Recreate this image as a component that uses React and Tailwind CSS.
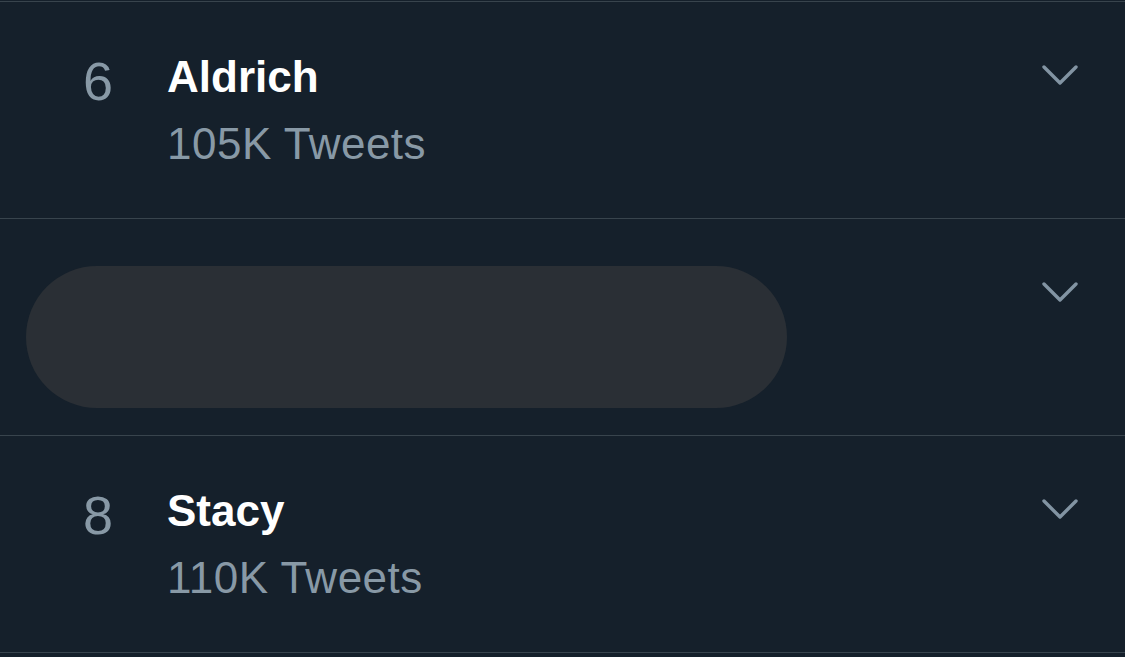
import React from "react";

function Chevron({ className = "" }) {
  return (
    <svg
      className={className}
      width="36"
      height="22"
      viewBox="0 0 36 22"
      fill="none"
      stroke="#8294a3"
      strokeWidth="3.4"
      strokeLinecap="round"
      strokeLinejoin="round"
    >
      <polyline points="2,3 18,19 34,3" />
    </svg>
  );
}

function TrendRow({ rank, name, count }) {
  return (
    <div className="flex h-[217px] items-start border-b border-[#38444d] pl-[83px] pr-[47px] pt-[49px]">
      <div className="w-[84px] mt-[4px] text-[54px] leading-[52px] text-[#8899a6]">{rank}</div>
      <div className="flex flex-1 flex-col">
        <div className="text-[44px] leading-[52px] font-bold text-white">{name}</div>
        <div className="mt-[15px] text-[44px] leading-[52px] tracking-[0.5px] text-[#8899a6]">{count}</div>
      </div>
      <Chevron className="mt-[13px] shrink-0" />
    </div>
  );
}

export default function App() {
  return (
    <div
      className="h-[657px] w-full overflow-hidden bg-[#15202b] pt-[1px]"
      style={{ fontFamily: '"Liberation Sans", Arial, sans-serif' }}
    >
      <div className="border-t border-[#38444d]">
        <TrendRow rank="6" name="Aldrich" count="105K Tweets" />
        <div className="flex h-[217px] items-start border-b border-[#38444d] pl-[26px] pr-[47px] pt-[47px]">
          <div className="h-[142px] w-[761px] rounded-full bg-[#2a2f35]" />
          <div className="flex-1" />
          <Chevron className="mt-[15px] shrink-0" />
        </div>
        <TrendRow rank="8" name="Stacy" count="110K Tweets" />
      </div>
    </div>
  );
}
